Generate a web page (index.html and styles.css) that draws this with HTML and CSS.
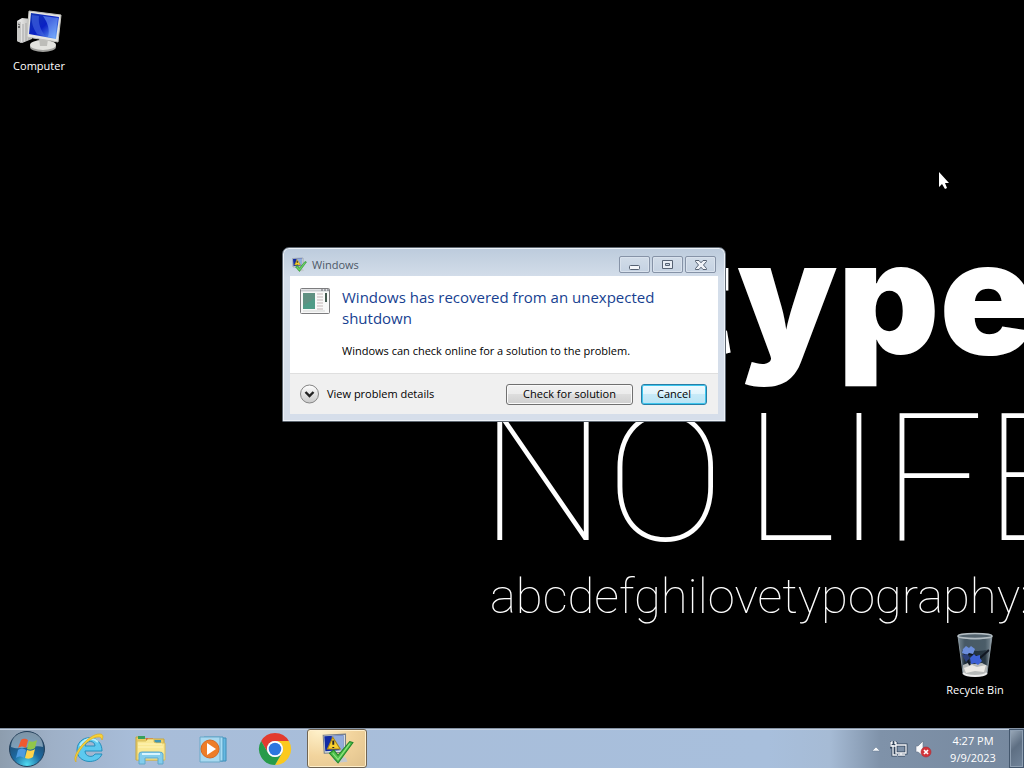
FILE: index.html
```html
<!DOCTYPE html>
<html lang="en">
<head>
<meta charset="utf-8">
<meta name="viewport" content="width=device-width, initial-scale=1">
<title>Windows</title>
<link rel="stylesheet" href="styles.css">
</head>
<body>
<main class="desktop">
  <div class="wallpaper" aria-hidden="true">
    <span class="wall-type">type</span>
    <span class="wall-no">NO</span>
    <span class="wall-life">LIFE</span>
    <span class="wall-abc">abcdefghilovetypography:</span>
  </div>

  <a class="shortcut shortcut-computer" href="#computer">
    <svg width="48" height="44" viewBox="0 0 48 44" aria-hidden="true">
      <defs>
        <linearGradient id="screen" x1="0" y1="0" x2="1" y2="1"><stop offset="0" stop-color="#1238ae"/><stop offset=".5" stop-color="#0a20c4"/><stop offset="1" stop-color="#78b9ff"/></linearGradient>
        <linearGradient id="metal" x1="0" x2="1"><stop offset="0" stop-color="#f6f6f6"/><stop offset="1" stop-color="#b5b5b2"/></linearGradient>
      </defs>
      <path d="M2 11 7 8 17 9v20L7 33 2 31Z" fill="url(#metal)"/>
      <path d="m2 11 4 1v21l-4-2Z" fill="#c7c7c5"/><path d="M8 14v18M11 13v18M14 13v17" stroke="#a6a6a6"/><path d="M3 14l2 1" stroke="#555"/><circle cx="4" cy="17" r="1" fill="#444"/>
      <ellipse cx="28" cy="37" rx="13" ry="5" fill="#9f9f9c"/><ellipse cx="28" cy="35" rx="13" ry="5" fill="#e3e3df"/>
      <path d="m24 28 9 1-1 7h-7Z" fill="#bdbdb9"/>
      <path d="m14 1 32 4-3 27-31-5Z" fill="#e6e6e3" stroke="#c1c1bd"/>
      <path d="m16 3 28 4-3 22-27-5Z" fill="url(#screen)"/>
      <path d="m17 5 7 1c-1 8 2 14 6 20l-8-2C18 18 16 12 17 5Z" fill="#4468df" opacity=".6"/>
      <path d="m28 6 15 2-3 20-7-1c2-7 0-14-5-21Z" fill="#85b4ff" opacity=".5"/>
    </svg>
    <span>Computer</span>
  </a>

  <a class="shortcut shortcut-bin" href="#recycle-bin">
    <svg width="44" height="48" viewBox="0 0 44 48" aria-hidden="true">
      <defs><linearGradient id="glass" x1="0" x2="1"><stop offset="0" stop-color="#8d9ca6"/><stop offset=".2" stop-color="#1f2e3a"/><stop offset=".8" stop-color="#283742"/><stop offset="1" stop-color="#a9b5bd"/></linearGradient></defs>
      <path d="M5 6h34l-5 37c-1 4-23 4-24 0Z" fill="url(#glass)"/>
      <path d="M7 9h30l-1 10c-10 4-18 0-28 3Z" fill="#637682" opacity=".6"/>
      <path d="m10 35 5-2 6 1 8-1 6 3-1 7c-5 4-19 4-24 0Z" fill="#b7bab9"/><path d="m11 38 8-3 5 2 9-2-2 7-9-1-9 2Z" fill="#eceae5"/>
      <path d="m36 20-9 8-7-3-9-3 6 13" fill="none" stroke="#111722" stroke-width="2"/>
      <path d="m10 19 3-3 3 2 2-2 4 3-2 5-4-1-2 2-5-2Z" fill="#6c8edb"/><path d="m17 28 4-4 2 2 4-1v3l2 3-4 4-3-2-4 1Z" fill="#3e62d5"/><path d="m9 25 5-1 3 4-4 4Z" fill="#2c417d"/>
      <path d="M5 6c4 4 30 4 34 0l-5 37c-1 4-23 4-24 0Z" fill="none" stroke="#87959e"/>
      <ellipse cx="22" cy="6" rx="17" ry="2.500" fill="#53636e" stroke="#b4bec4" stroke-width="1.500"/>
      <path d="M10 43c4 4 20 4 24 0" fill="none" stroke="#eee" stroke-width="2"/>
    </svg>
    <span>Recycle Bin</span>
  </a>

  <section class="window" role="dialog" aria-labelledby="window-title">
    <header class="titlebar">
      <svg width="16" height="16" viewBox="0 0 32 32" aria-hidden="true"><use href="#report"/></svg>
      <span id="window-title" class="title">Windows</span>
      <div class="controls">
        <button aria-label="Minimize"><svg width="14" height="12" viewBox="0 0 14 12"><rect x="1.500" y="6.500" width="10" height="4" rx="1" fill="#f5f7fa" stroke="#566273"/></svg></button>
        <button aria-label="Maximize"><svg width="14" height="12" viewBox="0 0 14 12"><path d="M1.500 1.500h10v8h-10Z M4.500 4.500v2h4v-2Z" fill="#e9eef5" fill-rule="evenodd" stroke="#566273"/></svg></button>
        <button aria-label="Close"><svg width="14" height="12" viewBox="0 0 14 12"><path d="M1.500 1.500h3.500L7 3.800 9 1.500h3.500v1L9.500 6l3 3.500v1H9L7 8.200 5 10.500H1.500v-1l3-3.500-3-3.500Z" fill="#f0f3f8" stroke="#566273"/></svg></button>
      </div>
    </header>
    <div class="window-body">
      <div class="message">
        <svg width="32" height="28" viewBox="0 0 32 28" aria-hidden="true">
          <rect x=".5" y="1.500" width="29" height="25" rx="1" fill="#f8f8f8" stroke="#7c7c7e"/>
          <path d="M1 3.500h28" stroke="#cacdd0" stroke-width="2"/><path d="M21 3h2m1 0h2m1 0h2" stroke="#686b72"/>
          <rect x="3" y="6" width="12" height="16" fill="#4f9b87"/><path d="M3 6h12v5L3 19Z" fill="#72877e" opacity=".5"/>
          <path d="M17 7h6M17 10h6M17 13h6M17 16h6M17 19h6M17 22h6" stroke="#c4b5b6"/><path d="M26 6v9" stroke="#44594f" stroke-width="2"/><path d="M3 24h22" stroke="#d5d8d6"/>
        </svg>
        <div>
          <h1>Windows has recovered from an unexpected shutdown</h1>
          <p>Windows can check online for a solution to the problem.</p>
        </div>
      </div>
      <footer class="actions">
        <button class="details">
          <svg width="20" height="20" viewBox="0 0 20 20" aria-hidden="true"><defs><linearGradient id="round" x2="0" y2="1"><stop offset="0" stop-color="#fff"/><stop offset="1" stop-color="#c9c9c9"/></linearGradient></defs><circle cx="9.500" cy="10" r="9" fill="url(#round)" stroke="#858585"/><path d="m5.500 8 4 4 4-4" fill="none" stroke="#222" stroke-width="2.400"/></svg>
          <span>View problem details</span>
        </button>
        <button class="push check">Check for solution</button>
        <button class="push cancel">Cancel</button>
      </footer>
    </div>
  </section>

  <svg class="pointer" width="14" height="20" viewBox="0 0 14 20" aria-hidden="true"><path d="M1 2v15l3-3 3 5 2-1-2-5h4Z" fill="#fff"/></svg>
</main>

<nav class="taskbar" aria-label="Taskbar">
  <button class="start" aria-label="Start">
    <svg width="38" height="38" viewBox="0 0 38 38">
      <defs><radialGradient id="orb" cx=".5" cy=".95" r=".9"><stop offset="0" stop-color="#50dcf2"/><stop offset=".45" stop-color="#1c69a1"/><stop offset="1" stop-color="#24435f"/></radialGradient></defs>
      <circle cx="19" cy="19" r="17.500" fill="url(#orb)" stroke="#23405b"/><path d="M3 17C3-3 35-3 35 17c-8-3-23 4-32 0Z" fill="#c9d8e3" opacity=".55"/>
      <path d="M13 10c3-2 5-1 7 0l-2 8c-3-2-5-2-8 0Z" fill="#ee5930"/><path d="M21 11c3 1 5 1 8-1l-2 8c-3 2-5 2-8 1Z" fill="#91c64a"/><path d="M10 20c3-2 5-2 8 0l-2 8c-3-2-5-2-8 0Z" fill="#4d9be0"/><path d="M19 20c3 1 5 1 8-1l-2 8c-3 2-5 2-8 1Z" fill="#fed34b"/>
    </svg>
  </button>
  <button class="task" aria-label="Internet Explorer">
    <svg width="34" height="34" viewBox="0 0 34 34"><path fill-rule="evenodd" d="M30 19H13c0 6 8 7 10 3h7c-4 11-25 10-25-4C5 2 30 1 30 19ZM13 14h10c0-6-9-6-10 0Z" fill="#5dc9ef" stroke="#258fbc"/><path d="M8 14c3-7 12-10 18-4" fill="none" stroke="#b5edfc" stroke-width="2"/><path d="M4 30C-2 24 17 1 28 2c4 0 3 4 2 6-1-3-2-3-4-3C17 5 3 21 4 30Z" fill="#f9d237" stroke="#d9aa22" stroke-width=".7"/></svg>
  </button>
  <button class="task" aria-label="Windows Explorer">
    <svg width="34" height="34" viewBox="0 0 34 34"><path d="M2 5h8l2 2h18v21H2Z" fill="#e9ce68" stroke="#c5a641"/><path d="M4 4h7v3H4Z" fill="#38a05c"/><path d="M12 6h7v3h-7Z" fill="#d56c43"/><path d="M19 8h8v3h-8Z" fill="#3f96b3"/><path d="M3 9h9l2-2h6v3l2 1h9v17H3Z" fill="#f9e894" stroke="#d8bd58"/><path d="M4 12h24M4 15h25" stroke="#fff5b9"/><path d="M5 32V22q0-2 3-2h17q4 0 4 2v10h-5v-6H11v6Z" fill="#83cdec" stroke="#5ca8cb"/><path d="M8 22h18" stroke="#d8f5ff" stroke-width="2"/></svg>
  </button>
  <button class="task" aria-label="Windows Media Player">
    <svg width="34" height="34" viewBox="0 0 34 34"><path d="M12 6h18v23H12Z" fill="#66b9e2" stroke="#3f8eb8"/><path d="M8 5h19v24H8Z" fill="#a6dcf4" stroke="#4b99c1"/><path d="M4 5h20v25H4Z" fill="#a8d9f0" stroke="#6ba9c9"/><circle cx="14" cy="17" r="9" fill="#ee7d27" stroke="#d76922"/><path d="m11 11 9 6-9 6Z" fill="#fff"/></svg>
  </button>
  <button class="task" aria-label="Google Chrome">
    <svg width="34" height="34" viewBox="0 0 34 34"><path d="M3.140 9A16 16 0 0 1 30.860 9L17 9A8 8 0 0 0 10.070 21Z" fill="#e33b2e"/><path d="M30.860 9A16 16 0 0 1 17 33L23.930 21A8 8 0 0 0 17 9Z" fill="#fbc91d"/><path d="M17 33A16 16 0 0 1 3.140 9L10.070 21A8 8 0 0 0 23.930 21Z" fill="#279b49"/><circle cx="17" cy="17" r="8" fill="#fff"/><circle cx="17" cy="17" r="6.300" fill="#2d76df"/></svg>
  </button>
  <button class="task active" aria-label="Windows problem report">
    <svg width="34" height="34" viewBox="0 0 32 32"><g id="report"><path d="m3 3 21-1v17L4 20Z" fill="#d9e0df" stroke="#777f8b"/><path d="m4 4 18-1v14L5 18Z" fill="#102aa5"/><path d="M11 4c0 5 3 10 8 13h3V3Z" fill="#93addb"/><path d="m12 5 7 11H7Z" fill="#f8cf2f" stroke="#ab8417"/><path d="M12.500 8v4m0 2v1" stroke="#242424" stroke-width="1.800"/><path d="m15 23 9 1 2 4-10 1-4-3Z" fill="#c4c9cf"/><path d="m9 20 4-3 4 5L28 9l3 1-14 19Z" fill="#4fc14b" stroke="#24882b"/><path d="m12 20 5 6L28 11" fill="none" stroke="#91e682"/></g></svg>
  </button>
  <div class="tray">
    <button aria-label="Show hidden icons"><svg width="12" height="12" viewBox="0 0 12 12"><path d="m1 8 4-4 4 4Z" fill="#f5f7fa" stroke="#657a91" stroke-width=".5"/></svg></button>
    <button aria-label="Network"><svg width="18" height="18" viewBox="0 0 18 18"><path d="M6 5h10v8H6ZM11 13v2M8 15h7M3 3v12h4M1 2v5h5V2M2 1v3m3-3v3" fill="none" stroke="#34465c" stroke-width="3"/><path d="M6 5h10v8H6ZM11 13v2M8 15h7M3 5v10h4M1 2v4h5V2M2 1v3m3-3v3" fill="none" stroke="#f6f8fa" stroke-width="1.300"/></svg></button>
    <button aria-label="Volume muted"><svg width="18" height="18" viewBox="0 0 18 18"><path d="M1 6h2l5-5v15l-5-4H1Z" fill="#f9fafc" stroke="#647387" stroke-width=".6"/><circle cx="11" cy="12" r="5" fill="#d3343a" stroke="#a92c35" stroke-width=".6"/><path d="m9 10 4 4m0-4-4 4" stroke="#fff" stroke-width="1.700"/></svg></button>
  </div>
  <button class="clock"><span>4:27 PM</span><span>9/9/2023</span></button>
  <button class="show-desktop" aria-label="Show desktop"></button>
</nav>
</body>
</html>
```
FILE: styles.css
```css
* { box-sizing: border-box; }
body {
  margin: 0;
  min-height: 100vh;
  display: flex;
  flex-direction: column;
  overflow: hidden;
  background: #000;
  color: #000;
  font: 11px/16px "Open Sans", "Noto Sans", sans-serif;
}
button { padding: 0; border: 0; background: none; color: inherit; font: inherit; }
svg { display: block; flex: none; }
.desktop { position: relative; flex: 1; overflow: hidden; }
.wallpaper { position: absolute; inset: 0; overflow: hidden; color: #fff; white-space: nowrap; }
.wallpaper span { position: absolute; line-height: 1; }
.wall-type { left: 670px; top: 218px; font-family: Inter, sans-serif; font-size: 158px; font-weight: 900; }
.wall-no, .wall-life { top: 390px; font-family: Roboto, sans-serif; font-size: 178px; font-weight: 100; }
.wall-no { left: 480px; }
.wall-life { left: 744px; }
.wall-abc { left: 490px; top: 572px; font-family: Roboto, sans-serif; font-size: 49px; font-weight: 100; }

.shortcut { position: absolute; display: flex; flex-direction: column; align-items: center; gap: 4px; width: 76px; color: #fff; text-decoration: none; }
.shortcut-computer { left: 1px; top: 10px; }
.shortcut-bin { left: 937px; top: 630px; }

.window {
  position: absolute;
  left: 282px;
  top: 247px;
  width: 444px;
  padding: 0 7px 7px;
  border: 1px solid #5d6670;
  border-radius: 7px 7px 1px 1px;
  background: linear-gradient(#bccbdc, #d4deea 30px, #d6deea);
  box-shadow: inset 0 0 0 1px #edf2f8;
}
.titlebar { display: flex; align-items: center; gap: 5px; height: 28px; padding: 5px 2px 0 1px; color: #4d5867; }
.title { flex: 1; }
.controls { display: flex; gap: 2px; }
.controls button { display: grid; place-items: center; width: 31px; height: 17px; border: 1px solid #8693a7; border-radius: 2px; background: linear-gradient(#d1dce8, #c5d2e2); box-shadow: inset 0 0 0 1px #d9e2ed; }
.window-body { background: #f0f0f0; }
.message { display: flex; gap: 10px; min-height: 98px; padding: 11px 50px 14px 10px; border-bottom: 1px solid #dfdfdf; background: #fff; }
h1 { margin: 0; color: #173f91; font-size: 15px; font-weight: 400; line-height: 21px; }
p { margin: 14px 0 0; }
.actions { display: flex; align-items: center; gap: 8px; height: 40px; padding: 0 11px 0 10px; }
.details { display: flex; align-items: center; gap: 7px; margin-right: auto; }
.push { height: 21px; border: 1px solid #707070; border-radius: 3px; background: linear-gradient(#f2f2f2, #ebebeb 50%, #dddddd 50%, #cfcfcf); box-shadow: inset 0 0 0 1px #fafafa; line-height: 18px; }
.check { width: 127px; }
.cancel { width: 66px; border-color: #287da5; background: linear-gradient(#effaff, #e0f4fc 50%, #c7eaf8 50%, #b9e4f5); box-shadow: inset 0 0 0 1px #3dc6ee; }
.pointer { position: absolute; left: 938px; top: 170px; }

.taskbar { display: flex; align-items: center; height: 40px; border-top: 1px solid #8593a5; background: linear-gradient(90deg, #8d9dae, #9eb0c7 5%, #a8bdd9 13%, #a8bfdc 75%, #a6bbd5 81%, #7f92a9 86%, #76889e); box-shadow: inset 0 1px #c5d2e2; color: #fff; }
.start { display: grid; place-items: center; width: 54px; }
.task { display: grid; place-items: center; width: 60px; height: 39px; margin-left: 2px; }
.start + .task { margin-left: 5px; }
.active { border: 1px solid #6f6453; border-radius: 3px; background: radial-gradient(ellipse at 20% 0, #fff2cc, #f2d49d 50%, #dfc18d); box-shadow: inset 0 0 0 1px #fff0cd; }
.tray { display: flex; align-items: center; gap: 7px; margin-left: auto; padding-right: 4px; }
.clock { display: flex; flex-direction: column; align-items: center; width: 72px; line-height: 17px; }
.show-desktop { width: 15px; height: 39px; border: 1px solid #43566c; background: linear-gradient(135deg, #9cabbb, #5e6f83 45%, #71849a); box-shadow: inset 0 0 0 1px #8e9fb2; }
```
